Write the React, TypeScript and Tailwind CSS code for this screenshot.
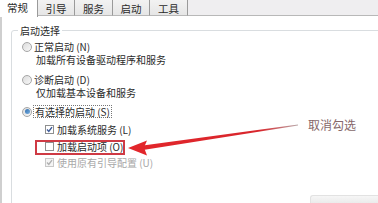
import React from "react";

const font = { fontFamily: '"Noto Sans CJK SC", "Noto Sans", sans-serif' };

function Radio({ checked }: { checked?: boolean }) {
  return (
    <span className="relative flex h-[10px] w-[10px] shrink-0 items-center justify-center rounded-full border border-[#a6a6a6] bg-gradient-to-br from-[#dcdcdc] to-[#f8f8f8]">
      {checked && <span className="h-[5px] w-[5px] rounded-full bg-gradient-to-br from-[#2f6fb0] to-[#7ab0e0]" />}
    </span>
  );
}

function Check({ checked, disabled }: { checked?: boolean; disabled?: boolean }) {
  return (
    <span
      className={`flex h-[9px] w-[9px] shrink-0 items-center justify-center border ${
        disabled ? "border-[#c8c8c8] bg-[#f4f4f4]" : "border-[#8e8f8f] bg-white"
      }`}
    >
      {checked && (
        <svg width="7" height="7" viewBox="0 0 7 7">
          <path
            d="M1 3.6 L2.8 5.4 L6 1.2"
            fill="none"
            stroke={disabled ? "#b0b0b0" : "#3c5a9a"}
            strokeWidth="1.4"
          />
        </svg>
      )}
    </span>
  );
}

const tabs = ["常规", "引导", "服务", "启动", "工具"];
const widths = ["w-[38px]", "w-[37px]", "w-[38px]", "w-[37px]", "w-[38px]"];

export default function App() {
  return (
    <div className="relative h-[203px] w-[378px] overflow-hidden bg-white text-[10px] leading-[13px] text-[#2a2a2a]" style={font}>
      {/* tab strip */}
      <div className="flex h-[16px] bg-[#efeef0]">
        {tabs.map((t, i) =>
          i === 0 ? (
            <div key={t} className={`${widths[i]} relative z-10 h-[17px] border-r border-[#9a9a9a] bg-white pl-[7px] pt-[1px] text-[10.5px]`}>
              {t}
            </div>
          ) : (
            <div
              key={t}
              className={`${widths[i]} flex h-[16px] justify-center border-r border-b border-r-[#9a9a9a] border-b-[#b8b8b8] bg-gradient-to-b from-[#f2f2f2] to-[#e6e6e6] pt-[2px] text-[10.5px]`}
            >
              {t}
            </div>
          )
        )}
        <div className="h-[16px] flex-1 border-b border-[#b8b8b8]" />
      </div>

      {/* content panel */}
      <div className="h-[187px] border-l-2 border-[#cfcfcf] pt-[8px]">
        <fieldset className="ml-[9px] h-[240px] w-[420px] rounded-[3px] border border-[#d9dde0] pl-[10px]">
          <legend className="ml-[-4px] px-[2px]">启动选择</legend>

          <div className="mt-[3px] flex h-[13px] items-center">
            <Radio />
            <span className="ml-[2px] leading-[12px]">正常启动 (N)</span>
          </div>
          <div className="ml-[14px] mt-[1px] h-[12px] leading-[12px]">加载所有设备驱动程序和服务</div>

          <div className="mt-[7px] flex h-[13px] items-center">
            <Radio />
            <span className="ml-[2px] leading-[12px]">诊断启动 (D)</span>
          </div>
          <div className="ml-[14px] mt-[1px] h-[12px] leading-[12px]">仅加载基本设备和服务</div>

          <div className="mt-[6px] flex h-[13px] items-center">
            <Radio checked />
            <span className="ml-[1px] border border-dotted border-[#777] px-[1px] leading-[11px]">有选择的启动 (S)</span>
          </div>

          <div className="ml-[23px] mt-[5px] flex h-[13px] items-center">
            <Check checked />
            <span className="ml-[3px] leading-[12px]">加载系统服务 (L)</span>
          </div>
          <div className="ml-[23px] mt-[4px] flex h-[13px] items-center">
            <Check />
            <span className="ml-[3px] leading-[12px]">加载启动项 (O)</span>
          </div>
          <div className="ml-[23px] mt-[3px] flex h-[13px] items-center text-[#a8a8a8]">
            <Check checked disabled />
            <span className="ml-[3px] leading-[12px]">使用原有引导配置 (U)</span>
          </div>
        </fieldset>
      </div>

      {/* annotation: red box */}
      <div className="absolute left-[35px] top-[140px] h-[15px] w-[90px] border-2 border-[#cf3a44]" />

      {/* annotation arrow */}
      <svg className="pointer-events-none absolute left-0 top-0" width="378" height="203" viewBox="0 0 378 203">
        <defs>
          <linearGradient id="shaft" x1="144" y1="148" x2="298" y2="125" gradientUnits="userSpaceOnUse">
            <stop offset="0" stopColor="#e2262b" />
            <stop offset="0.75" stopColor="#d8262c" />
            <stop offset="1" stopColor="#b9a9aa" />
          </linearGradient>
        </defs>
        <polygon points="143,145.5 143,150 298,125.6 298,124.6" fill="url(#shaft)" />
        <polygon points="128,148 147,140.5 144,147.5 147,155.5" fill="#e2262b" />
      </svg>

      <div className="absolute left-[308px] top-[118px] text-[12px] leading-[14px] text-[#86686a]">取消勾选</div>

      {/* partially visible button at bottom */}
      <div className="absolute left-[310px] top-[195px] h-[10px] w-[70px] rounded-tl-[3px] border-t border-l border-[#e2e2e2] bg-gradient-to-b from-[#f6f6f6] to-[#e8e8e8]" />
    </div>
  );
}
